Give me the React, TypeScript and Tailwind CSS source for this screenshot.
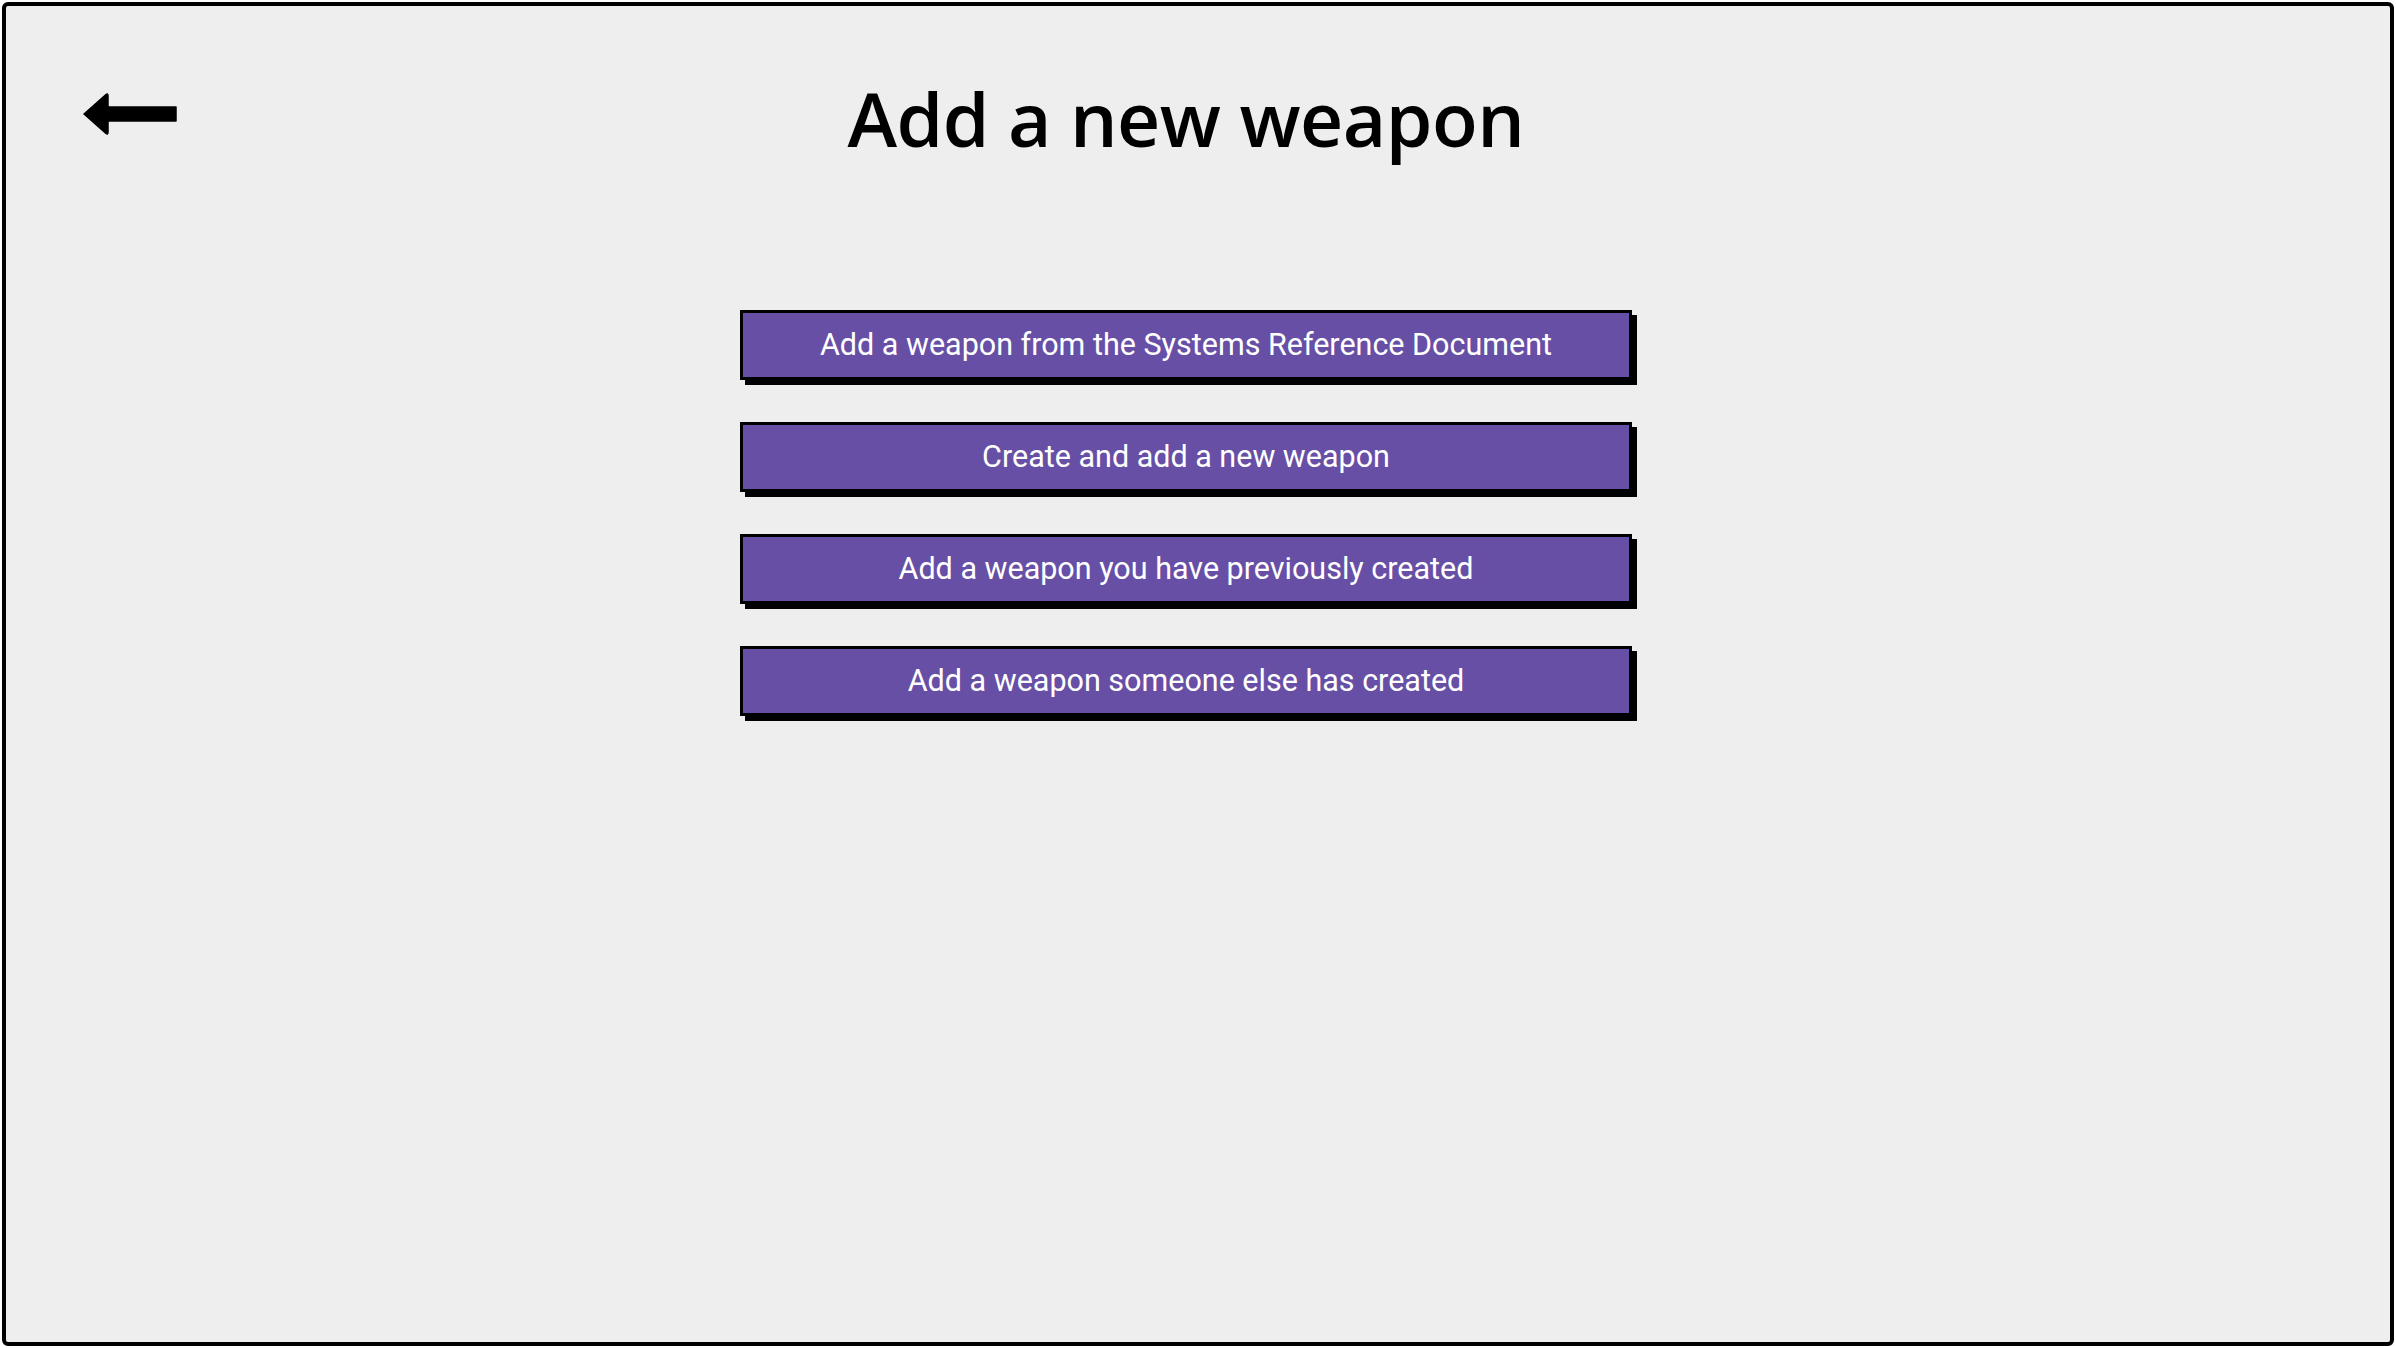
const opties = [
  "Add a weapon from the Systems Reference Document",
  "Create and add a new weapon",
  "Add a weapon you have previously created",
  "Add a weapon someone else has created",
];

function TerugPijl() {
  return (
    <svg width="94" height="42" viewBox="0 0 94 42" aria-label="Terug">
      <path
        d="M1 21 L23 1.5 Q25 0 25 3 L25 14 L93 14 L93 28 L25 28 L25 39 Q25 42 23 40.5 Z"
        fill="#000"
        stroke="#000"
        strokeWidth="1.5"
        strokeLinejoin="round"
      />
    </svg>
  );
}

export default function App() {
  return (
    <div className="h-[1348px] w-full bg-white p-[2px]" style={{ fontFamily: "'Open Sans', 'Noto Sans', sans-serif" }}>
      <div className="h-full w-full rounded-[6px] border-4 border-black bg-[#eeeeee]">
        <div className="grid grid-cols-[1fr_auto_1fr] items-start pr-[24px] pt-[67px]">
          <button className="ml-[77px] mt-[20px] w-fit">
            <TerugPijl />
          </button>
          <h1 className="text-[75px] font-semibold leading-[1.2] tracking-[-0.5px] text-black">
            Add a new weapon
          </h1>
          <div />
        </div>

        <div className="mt-[147px] flex flex-col items-center gap-[42px] pr-[24px]">
          {opties.map(optie => (
            <button
              key={optie}
              className="flex h-[70px] w-[892px] items-center justify-center border-[3px] border-black bg-[#674fa6] text-[30.5px] text-white shadow-[5px_5px_0_#000]"
              style={{ fontFamily: "Roboto, 'Noto Sans', sans-serif" }}
            >
              {optie}
            </button>
          ))}
        </div>
      </div>
    </div>
  );
}
